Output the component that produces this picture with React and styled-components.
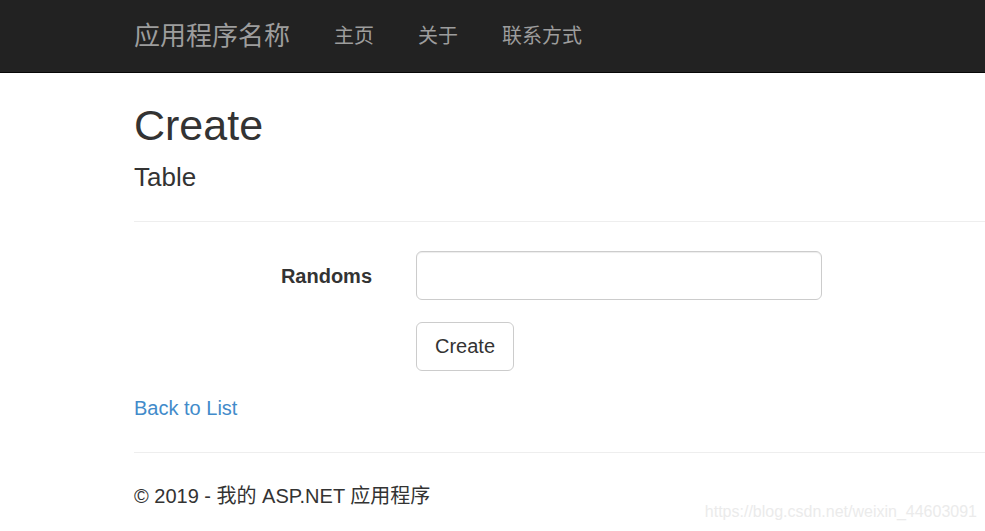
import React from "react";
import styled, { createGlobalStyle } from "styled-components";

const GlobalStyle = createGlobalStyle`
  html, body {
    margin: 0;
    padding: 0;
    background: #fff;
  }
  body {
    font-family: "Liberation Sans", "Noto Sans CJK SC", Arial, sans-serif;
    font-size: 20px;
    line-height: 1.43;
    color: #333;
    overflow: hidden;
  }
  * {
    box-sizing: border-box;
  }
`;

const Page = styled.div`
  position: relative;
  width: 985px;
  height: 531px;
  overflow: hidden;
`;

const Nav = styled.nav`
  height: 73px;
  background-color: #222;
  border-bottom: 1px solid #080808;
  display: flex;
  align-items: center;
  padding-left: 134px;
`;

const Brand = styled.a`
  font-size: 26px;
  line-height: 29px;
  color: #9d9d9d;
  text-decoration: none;
  margin-right: 22px;
`;

const NavLinks = styled.div`
  display: flex;
`;

const NavLink = styled.a`
  font-size: 20px;
  line-height: 29px;
  color: #9d9d9d;
  text-decoration: none;
  padding: 0 22px;
`;

const Container = styled.div`
  padding: 0 0 0 134px;
`;

const Title = styled.h2`
  font-size: 43px;
  font-weight: 500;
  line-height: 1.1;
  margin: 29px 0 14px;
`;

const Subtitle = styled.h4`
  font-size: 26px;
  font-weight: 500;
  line-height: 1.1;
  margin: 14px 0 14px;
`;

const Rule = styled.hr`
  border: 0;
  border-top: 1px solid #eee;
  margin: 29px 0;
`;

const FormGroup = styled.div`
  display: flex;
  align-items: flex-start;
  margin-bottom: 22px;
`;

const LabelCol = styled.label`
  width: 238px;
  flex: none;
  text-align: right;
  font-weight: bold;
  padding-top: 11px;
  line-height: 29px;
  margin-right: 44px;
`;

const Offset = styled.div`
  width: 282px;
  flex: none;
`;

const Input = styled.input`
  width: 406px;
  height: 49px;
  border: 1px solid #ccc;
  border-radius: 6px;
  box-shadow: inset 0 1px 1px rgba(0, 0, 0, 0.075);
  font-size: 20px;
  padding: 9px 17px;
  font-family: inherit;
  outline: none;
`;

const Button = styled.button`
  height: 49px;
  padding: 0 18px;
  font-family: inherit;
  font-size: 20px;
  color: #333;
  background: #fff;
  border: 1px solid #ccc;
  border-radius: 6px;
`;

const LinkRow = styled.div`
  line-height: 29px;
  padding-top: 1px;
`;

const Link = styled.a`
  color: #428bca;
  text-decoration: none;
`;

const Footer = styled.footer`
  p {
    margin: 0;
    line-height: 29px;
  }
`;

const Watermark = styled.div`
  position: absolute;
  right: 8px;
  bottom: 7px;
  font-size: 16px;
  color: #ebebeb;
  font-family: "Liberation Sans", Arial, sans-serif;
`;

export default function App() {
  return (
    <Page>
      <GlobalStyle />
      <Nav>
        <Brand href="#">应用程序名称</Brand>
        <NavLinks>
          <NavLink href="#">主页</NavLink>
          <NavLink href="#">关于</NavLink>
          <NavLink href="#">联系方式</NavLink>
        </NavLinks>
      </Nav>
      <Container>
        <Title>Create</Title>
        <Subtitle>Table</Subtitle>
        <Rule />
        <form>
          <FormGroup>
            <LabelCol>Randoms</LabelCol>
            <Input type="text" />
          </FormGroup>
          <FormGroup>
            <Offset />
            <Button type="button">Create</Button>
          </FormGroup>
        </form>
        <LinkRow>
          <Link href="#">Back to List</Link>
        </LinkRow>
        <Rule />
        <Footer>
          <p>© 2019 - 我的 ASP.NET 应用程序</p>
        </Footer>
      </Container>
      <Watermark>https://blog.csdn.net/weixin_44603091</Watermark>
    </Page>
  );
}
